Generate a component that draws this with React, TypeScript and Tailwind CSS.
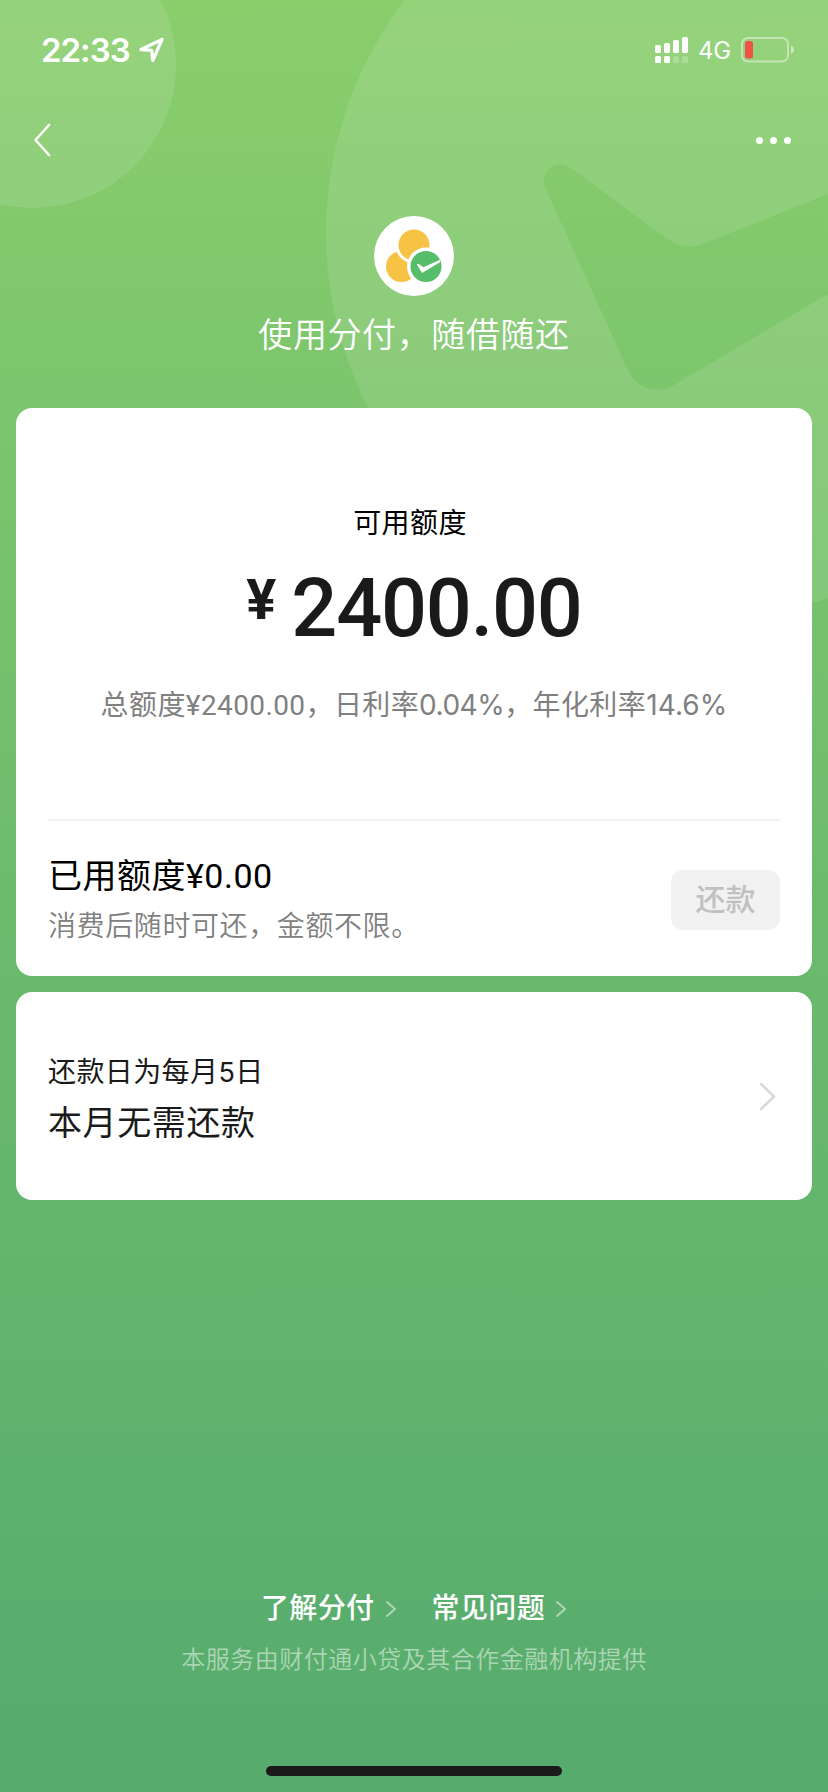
import type { ReactNode } from "react";

function Backdrop() {
  return (
    <svg className="absolute inset-0" width="828" height="1792" viewBox="0 0 828 1792" fill="none">
      <circle cx="33" cy="65" r="143" fill="#fff" fillOpacity="0.1" />
      <path
        fill="#fff"
        fillOpacity="0.1"
        fillRule="evenodd"
        d="M326 233a384 384 0 1 0 768 0a384 384 0 1 0 -768 0Z M571 168C558 159 544 167 544 181C544 185 546 190 549 196L628 370C637 389 656 395 674 385L828 294V194L705 243C691 249 679 247 666 238Z"
      />
    </svg>
  );
}

function StatusBar() {
  return (
    <div className="flex h-[100px] items-center justify-between pr-[33px] pl-[41px] text-white">
      <div className="flex items-center">
        <span className="font-['Inter',sans-serif] text-[33px] leading-none font-semibold tracking-[-1px]">22:33</span>
        <svg className="ml-[9px]" width="26" height="26" viewBox="0 0 26 26" fill="none">
          <path
            d="M2 12.6L23 2.400L13.800 23.400L12.600 13.400Z"
            stroke="currentColor"
            strokeWidth="3.3"
            strokeLinejoin="round"
          />
        </svg>
      </div>
      <div className="flex items-center">
        <svg width="33" height="26" viewBox="0 0 33 26" fill="currentColor">
          <rect x="0" y="8" width="6" height="8" rx="1.6" />
          <rect x="9" y="6" width="6" height="10" rx="1.6" />
          <rect x="18" y="3" width="6" height="13" rx="1.6" />
          <rect x="27" y="0" width="6" height="16" rx="1.6" />
          <rect x="0" y="19" width="6" height="7" rx="1.6" />
          <rect x="9" y="19" width="6" height="7" rx="1.6" />
          <rect x="18" y="19" width="6" height="7" rx="1.6" opacity="0.22" />
          <rect x="27" y="19" width="6" height="7" rx="1.6" opacity="0.22" />
        </svg>
        <span className="mt-[2px] ml-[10px] w-[34px] font-['Inter',sans-serif] text-[24px] leading-none tracking-[-0.3px]">4G</span>
        <svg className="ml-[9px]" width="54" height="26" viewBox="0 0 54 26" fill="none">
          <rect x="1" y="1" width="46" height="23.500" rx="6" stroke="#fff" strokeOpacity="0.45" strokeWidth="2" />
          <rect x="4" y="4" width="8" height="17.500" rx="2.500" fill="#f05246" />
          <path d="M50 8.500C54 10 54 15.500 50 17Z" fill="#fff" fillOpacity="0.5" />
        </svg>
      </div>
    </div>
  );
}

function NavBar() {
  return (
    <div className="flex h-[80px] items-center justify-between pr-[37px] pl-[33px] text-white">
      <svg width="18" height="34" viewBox="0 0 18 34" fill="none">
        <path d="M16 2L2.500 17L16 32" stroke="currentColor" strokeWidth="2.6" strokeLinecap="round" strokeLinejoin="round" />
      </svg>
      <div className="flex gap-[7px]">
        <i className="size-[7px] rounded-full bg-white" />
        <i className="size-[7px] rounded-full bg-white" />
        <i className="size-[7px] rounded-full bg-white" />
      </div>
    </div>
  );
}

function FenfuLogo() {
  return (
    <svg width="80" height="80" viewBox="0 0 80 80">
      <circle cx="40" cy="40" r="40" fill="#fff" />
      <circle cx="27.500" cy="50.500" r="15.500" fill="#f6c344" />
      <circle cx="40" cy="29" r="18.500" fill="#fff" />
      <circle cx="40" cy="29" r="15.500" fill="#f6c344" />
      <circle cx="52" cy="50.500" r="19" fill="#fff" />
      <circle cx="52" cy="50.500" r="15.500" fill="#56be6a" />
      <path d="M43 48.500C43.500 47.500 44.500 47.700 45.200 48.200L49.500 51.200L66 43.800V46.200L48 57Z" fill="#fff" />
    </svg>
  );
}

function Chevron({ className, width, height, stroke }: { className: string; width: number; height: number; stroke: number }) {
  return (
    <svg className={className} width={width} height={height} viewBox={`0 0 ${width} ${height}`} fill="none">
      <path
        d={`M2 2L${width - 2} ${height / 2}L2 ${height - 2}`}
        stroke="currentColor"
        strokeWidth={stroke}
        strokeLinecap="round"
        strokeLinejoin="round"
      />
    </svg>
  );
}

function FooterLink({ children }: { children: ReactNode }) {
  return (
    <a className="flex items-center">
      <span className="text-[28px] leading-[40px] font-medium tracking-[0.4px]">{children}</span>
      <Chevron className="ml-[10px] text-white/50" width={12} height={18} stroke={2} />
    </a>
  );
}

export default function App() {
  return (
    <div className="relative h-[1792px] w-[828px] overflow-hidden bg-linear-to-b from-[#8ace6c] via-[#6cbb6d] to-[#56ab6d] font-['Roboto','Noto_Sans_CJK_SC',sans-serif]">
      <Backdrop />
      <div className="relative flex h-full flex-col">
        <StatusBar />
        <NavBar />

        <header className="flex h-[228px] flex-col items-center pt-[36px]">
          <FenfuLogo />
          <h1 className="mt-[14px] text-[34px] leading-[50px] font-[350] tracking-[0.6px] text-white">使用分付，随借随还</h1>
        </header>

        <main className="flex flex-col gap-4 px-4">
          <section className="flex h-[568px] flex-col rounded-2xl bg-white px-8">
            <div className="flex h-[411px] flex-col items-center pt-[96px]">
              <p className="pr-[8px] text-[28px] leading-[40px] tracking-[0.4px] text-black">可用额度</p>
              <div className="mt-[24px] flex h-[82px] items-start text-[#1a1a1a]">
                <span className="mt-[2px] mr-[15px] text-[56px] leading-[60px] font-bold">¥</span>
                <span className="text-[81px] leading-[82px] font-medium tracking-[-1.2px]">2400.00</span>
              </div>
              <p className="mt-[35px] text-[28px] leading-[40px] tracking-[0.4px] whitespace-nowrap text-[#808080]">
                总额度¥2400.00，日利率
                <span className="font-['Inter',sans-serif] text-[28px] tracking-[-0.5px]">0.04%</span>
                ，年化利率
                <span className="font-['Inter',sans-serif] text-[28px] tracking-[0.1px]">14.6%</span>
              </p>
            </div>
            <div className="h-[2px] bg-[#f2f2f2]" />
            <div className="flex flex-1 items-center justify-between">
              <div className="pt-[2px]">
                <p className="text-[34px] leading-[50px] tracking-[0.5px] text-black">已用额度¥0.00</p>
                <p className="mt-[4px] text-[28px] leading-[44px] font-[350] tracking-[0.6px] text-[#808080]">消费后随时可还，金额不限。</p>
              </div>
              <button className="mt-[2px] h-[60px] w-[109px] rounded-xl bg-[#f1f1f1] text-[30px] leading-[60px] font-medium text-[#c0c0c0]">还款</button>
            </div>
          </section>

          <section className="flex h-[208px] items-center justify-between rounded-2xl bg-white pr-[36px] pl-8 text-[#1a1a1a]">
            <div className="pt-[3px]">
              <p className="text-[28px] leading-[50px] tracking-[0.4px]">
                还款日为每月<span className="font-['Inter',sans-serif] text-[27px]">5</span>日
              </p>
              <p className="text-[34px] leading-[50px] tracking-[0.6px]">本月无需还款</p>
            </div>
            <Chevron className="text-[#d8d8d8]" width={17} height={29} stroke={2.6} />
          </section>
        </main>

        <footer className="mt-auto flex h-[203px] flex-col items-center text-white">
          <div className="flex gap-[35px]">
            <FooterLink>了解分付</FooterLink>
            <FooterLink>常见问题</FooterLink>
          </div>
          <p className="mt-[14px] text-[24px] leading-[34px] font-[350] tracking-[0.5px] text-white/50">
            本服务由财付通小贷及其合作金融机构提供
          </p>
          <div className="mt-auto mb-4 h-[10px] w-[296px] rounded-full bg-[#1a1a1a]" />
        </footer>
      </div>
    </div>
  );
}
